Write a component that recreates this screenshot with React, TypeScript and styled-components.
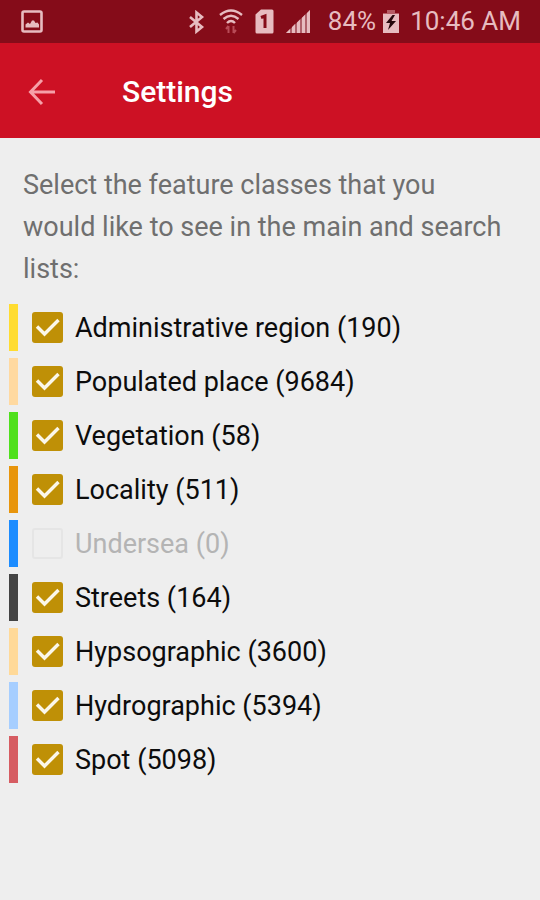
import React, { useState } from "react";
import styled, { createGlobalStyle } from "styled-components";

const GlobalStyle = createGlobalStyle`
  *, *::before, *::after { box-sizing: border-box; }
  body {
    margin: 0;
    background: #eeeeee;
    color: #0c0c0c;
    font-family: Roboto, "Liberation Sans", sans-serif;
    font-size: 27px;
  }
`;

const Screen = styled.div`
  display: flex;
  flex-direction: column;
  min-height: 100vh;
  background: #eeeeee;
`;

const StatusBar = styled.div`
  display: flex;
  align-items: center;
  height: 43px;
  padding: 0 19px 0 20px;
  background: #850c19;
  color: #e7bcc0;
`;

const StatusGroup = styled.div`
  display: flex;
  align-items: center;
  margin-left: auto;
`;

const StatusIcon = styled.svg<{ $gap?: number }>`
  display: block;
  flex: none;
  margin-right: ${(p) => p.$gap ?? 0}px;
`;

const StatusText = styled.span<{ $gap?: number }>`
  font-size: 26px;
  line-height: 43px;
  margin-right: ${(p) => p.$gap ?? 0}px;
`;

const AppBar = styled.header`
  display: flex;
  align-items: center;
  gap: 53px;
  height: 95px;
  padding: 2px 15px 0;
  background: #cd1124;
`;

const BackButton = styled.button`
  display: grid;
  place-items: center;
  width: 54px;
  height: 54px;
  padding: 0;
  border: 0;
  background: none;
  color: #f6a0a8;
  cursor: pointer;
`;

const Title = styled.h1`
  margin: 0;
  font-size: 30px;
  font-weight: 500;
  line-height: 36px;
  color: #ffffff;
`;

const Content = styled.main`
  padding: 26px 9px;
`;

const Intro = styled.p`
  margin: 0 23px 14px 14px;
  line-height: 42px;
  color: #6f6f6f;
`;

const ClassList = styled.ul`
  display: flex;
  flex-direction: column;
  gap: 7px;
  margin: 0;
  padding: 0;
  list-style: none;
`;

const ClassRow = styled.li<{ $color: string }>`
  display: flex;
  align-items: center;
  height: 47px;
  padding-left: 14px;
  border-left: 9px solid ${(p) => p.$color};
`;

const ClassLabel = styled.label<{ $disabled: boolean }>`
  display: flex;
  align-items: center;
  gap: 12px;
  line-height: 32px;
  color: ${(p) => (p.$disabled ? "#b4b4b4" : "#0c0c0c")};
`;

const CheckFrame = styled.span`
  display: grid;
  width: 31px;
  height: 31px;

  > * { grid-area: 1 / 1; }
`;

const CheckInput = styled.input`
  appearance: none;
  width: 31px;
  height: 31px;
  margin: 0;
  border: 2px solid #8a8a8a;
  border-radius: 3px;

  &:checked { border: 0; background: #bf9006; }
  &:disabled { border-color: #e5e5e5; }
`;

const CheckMark = styled.svg`
  pointer-events: none;
`;

interface FeatureClass {
  name: string;
  count: number;
  color: string;
}

const featureClasses: FeatureClass[] = [
  { name: "Administrative region", count: 190, color: "#ffdc30" },
  { name: "Populated place", count: 9684, color: "#ffd9a0" },
  { name: "Vegetation", count: 58, color: "#4fe01c" },
  { name: "Locality", count: 511, color: "#e8950c" },
  { name: "Undersea", count: 0, color: "#1c8cff" },
  { name: "Streets", count: 164, color: "#444444" },
  { name: "Hypsographic", count: 3600, color: "#ffd998" },
  { name: "Hydrographic", count: 5394, color: "#a6ceff" },
  { name: "Spot", count: 5098, color: "#d65c62" },
];

const PictureIcon = () => (
  <StatusIcon width="24" height="24" viewBox="0 0 24 24" aria-hidden="true">
    <rect x="2.5" y="1.5" width="19" height="20" rx="1.5" fill="none" stroke="currentColor" strokeWidth="2.6" />
    <path d="M5.5 17.5v-3l2.5-2 2 1.5 2-3.500 2 0 1.500 2.500 2-.5 1.500 2v3z" fill="currentColor" />
  </StatusIcon>
);

const BluetoothIcon = () => (
  <StatusIcon $gap={14} width="17" height="24" viewBox="0 0 17 24" aria-hidden="true">
    <path d="M2 7l12 10-5.500 4.500V2.500L14 7 2 17" fill="none" stroke="currentColor" strokeWidth="2.6" />
  </StatusIcon>
);

const WifiIcon = () => (
  <StatusIcon $gap={12} width="24" height="27" viewBox="0 0 24 27" aria-hidden="true">
    <g fill="none" stroke="currentColor" strokeWidth="2.4">
      <path d="M1 7Q12-2 23 7" />
      <path d="M4.500 11q7.500-6.500 15 0" />
      <path d="M8 15q4-4 8 0" />
    </g>
    <path d="M9.500 25v-7m-2.500 3l2.500-3M14.500 18v7m2.500-3l-2.500 3" fill="none" stroke="#b84b57" strokeWidth="2" />
  </StatusIcon>
);

const SimIcon = () => (
  <StatusIcon $gap={12} width="19" height="25" viewBox="0 0 19 25" aria-hidden="true">
    <path d="M6 .5h11q1.500 0 1.500 1.500v21q0 1.500-1.500 1.500H2Q.5 24.500 .5 23V5.500z" fill="currentColor" />
    <path d="M6 8.500l4-1.500v12" fill="none" stroke="#850c19" strokeWidth="3" />
  </StatusIcon>
);

const SignalIcon = () => (
  <StatusIcon $gap={17} width="25" height="25" viewBox="0 0 25 25" aria-hidden="true">
    <path d="M0 24L24 1v23z" fill="#b0606a" />
    <path d="M0 24l4-4v4zM6 18l3-3v9H6zM11 13.500l3-3V24h-3zM16 8.700l3-3V24h-3zM21 4l3-3v23h-3z" fill="currentColor" />
  </StatusIcon>
);

const BatteryIcon = () => (
  <StatusIcon $gap={10} width="18" height="25" viewBox="0 0 18 25" aria-hidden="true">
    <path d="M5 1h8v3h4v4H1V4h4z" fill="#b65c65" />
    <path d="M1 5h16v19H1z" fill="currentColor" />
    <path d="M10.500 6L4 14h4l-2 7 8-9H9.500L13 6z" fill="#25080c" />
  </StatusIcon>
);

function FeatureClassRow({ item }: { item: FeatureClass }) {
  const disabled = item.count === 0;
  const [checked, setChecked] = useState(!disabled);
  return (
    <ClassRow $color={item.color}>
      <ClassLabel $disabled={disabled}>
        <CheckFrame>
          <CheckInput
            type="checkbox"
            checked={checked}
            disabled={disabled}
            onChange={(e) => setChecked(e.target.checked)}
          />
          {checked && (
            <CheckMark width="31" height="31" viewBox="0 0 31 31" aria-hidden="true">
              <path d="M5 14.500l7.500 7.500L26.500 8" fill="none" stroke="#fbf7ea" strokeWidth="3.4" />
            </CheckMark>
          )}
        </CheckFrame>
        {item.name} ({item.count})
      </ClassLabel>
    </ClassRow>
  );
}

export default function App() {
  return (
    <Screen>
      <GlobalStyle />
      <StatusBar>
        <PictureIcon />
        <StatusGroup>
          <BluetoothIcon />
          <WifiIcon />
          <SimIcon />
          <SignalIcon />
          <StatusText $gap={6}>84%</StatusText>
          <BatteryIcon />
          <StatusText>10:46 AM</StatusText>
        </StatusGroup>
      </StatusBar>
      <AppBar>
        <BackButton type="button" aria-label="Back">
          <svg width="28" height="28" viewBox="0 0 28 28" aria-hidden="true">
            <path d="M27 14H3M14 2L2.500 14 14 26" fill="none" stroke="currentColor" strokeWidth="3" />
          </svg>
        </BackButton>
        <Title>Settings</Title>
      </AppBar>
      <Content>
        <Intro>
          Select the feature classes that you would like to see in the main and search lists:
        </Intro>
        <ClassList>
          {featureClasses.map((item) => (
            <FeatureClassRow key={item.name} item={item} />
          ))}
        </ClassList>
      </Content>
    </Screen>
  );
}
